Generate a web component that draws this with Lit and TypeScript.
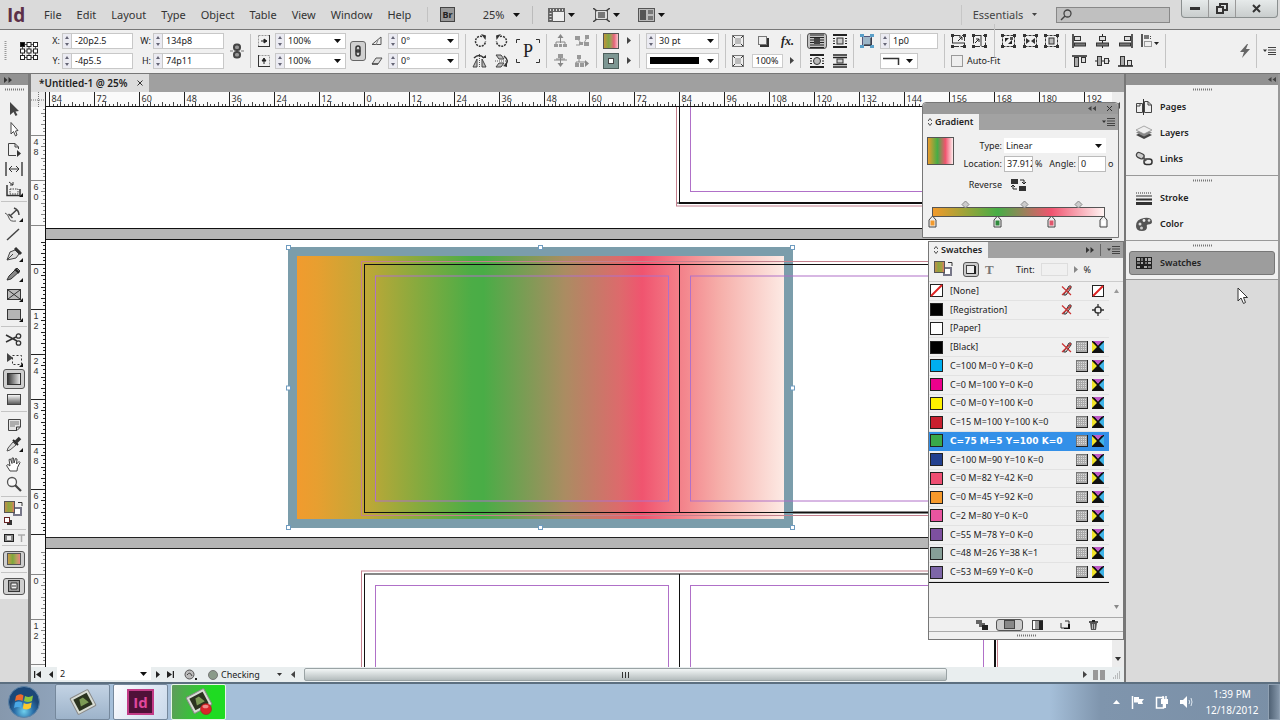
import { LitElement, html, svg, css, nothing } from "lit";
import { customElement } from "lit/decorators.js";
import { classMap } from "lit/directives/class-map.js";

const icon = (w: number, h: number, body: unknown) =>
  html`<svg class="ic" width=${w} height=${h} viewBox="0 0 ${w} ${h}" aria-hidden="true">${body}</svg>`;

const down = () => icon(7, 4, svg`<path d="M0 0H7L3.5 4Z" fill="#111"/>`);
const playRight = (c = "#444") => icon(4, 7, svg`<path d="M0 0V7L4 3.5Z" fill=${c}/>`);
const playLeft = (c = "#444") => icon(4, 7, svg`<path d="M4 0V7L0 3.5Z" fill=${c}/>`);
const dblLeft = () => icon(8, 5, svg`<path d="M3.5 0V5L0 2.5ZM8 0V5L4.500 2.500Z" fill="#444"/>`);
const dblRight = () => icon(8, 6, svg`<path d="M0 0V6L3.500 3ZM4.500 0V6L8 3Z" fill="#333"/>`);
const panelMenu = () =>
  icon(13, 8, svg`<path d="M0 2.500H4L2 5Z" fill="#333"/><path d="M5 .5H13M5 3H13M5 5.500H13M5 7.500H13" stroke="#444"/>`);
const grip = () => icon(19, 3, svg`<path d="M0 1.500H19" stroke="#777" stroke-width="2" stroke-dasharray="1 1"/>`);

/* ---------- control strip icons ---------- */
const refPoint = () =>
  icon(18, 18, svg`<path d="M4 2.500H14M4 9H14M4 15.500H14M2.500 4V14M9 4V14M15.500 4V14" stroke="#555"/>
    ${[0, 6.5, 13].map((y) => [0, 6.5, 13].map((x) => svg`<rect x=${x + 0.5} y=${y + 0.5} width="4" height="4" fill=${x + y === 0 ? "#000" : "#fff"} stroke="#222"/>`))}`);
const unlinked = () =>
  icon(14, 16, svg`<rect x="4" y="1.500" width="6" height="5.500" rx="2.500" fill="#999" stroke="#444" stroke-width="2"/>
    <rect x="4" y="9" width="6" height="5.500" rx="2.500" fill="#999" stroke="#444" stroke-width="2"/><path d="M0 8H3M11 8H14" stroke="#777"/>`);
const linked = () =>
  icon(8, 12, svg`<rect x="2" y="1" width="4" height="6" rx="2" fill="none" stroke="#333" stroke-width="1.500"/><rect x="2" y="5" width="4" height="6" rx="2" fill="none" stroke="#333" stroke-width="1.500"/>`);
const scaleX = () =>
  icon(12, 12, svg`<rect x="0.500" y="0.500" width="11" height="11" fill="none" stroke="#999" stroke-dasharray="2 1"/><path d="M0 11.500H12M11.500 0V12" stroke="#333"/><path d="M3 6H8M6 4L9 6L6 8Z" stroke="#222" fill="#222"/>`);
const scaleY = () =>
  icon(12, 12, svg`<rect x="0.500" y="0.500" width="11" height="11" fill="none" stroke="#999" stroke-dasharray="2 1"/><path d="M0 11.500H12M.5 0V12" stroke="#333"/><path d="M6 9V4M4 6L6 3L8 6Z" stroke="#222" fill="#222"/>`);
const rotAngle = () => icon(12, 10, svg`<path d="M1 8.500H10V1L1 8.500" fill="none" stroke="#555"/><path d="M5 9L7 4" stroke="#888"/>`);
const shear = () => icon(12, 8, svg`<path d="M1 7H7L11 1H5Z" fill="#ddd" stroke="#555"/><path d="M1 7H7" stroke="#222"/>`);
const rotate = (cw: boolean) =>
  icon(14, 14, svg`<g transform=${cw ? "" : "translate(14 0) scale(-1 1)"}>
    <path d="M9 2.500A5 5 0 1 0 12.500 7" fill="none" stroke="#333" stroke-width="1.500" stroke-dasharray="2 1"/><path d="M8 0L13 1.500L12.500 6Z" fill="#333"/></g>`);
const flipH = () =>
  icon(15, 14, svg`<path d="M7.500 0V14" stroke="#555" stroke-dasharray="1 1"/><path d="M5 5L1 13H5ZM10 5L14 13H10Z" fill="#bbb" stroke="#444"/><path d="M2 4Q7 -1 12 4" fill="none" stroke="#333" stroke-width="1.500"/><path d="M10 4H14V1Z" fill="#333"/>`);
const flipV = () =>
  icon(14, 14, svg`<path d="M0 7H14" stroke="#555" stroke-dasharray="1 1"/><path d="M1 1H6L9 5H4ZM1 13H6L9 9H4Z" fill="#bbb" stroke="#444"/><path d="M9 2Q15 7 10 11" fill="none" stroke="#333" stroke-width="1.500"/><path d="M8 12L12 13L12 9Z" fill="#333"/>`);
const tree = (v: number) =>
  icon(15, 14, [
    svg`<path d="M7.500 4V9M3 11V8H12V11" stroke="#888" fill="none"/><path d="M7.500 0L10.500 4H4.500Z" fill="#888"/><path d="M1 10H5V13H1ZM6 10H9V13H6ZM10 10H14V13H10Z" fill="#999"/>`,
    svg`<path d="M2 4L6 9M13 2L9 9M1 11H5" stroke="#999"/><path d="M0 2H5V6H0ZM10 1H14V5H10ZM4 8H8V11H4ZM9 8H14V12H9Z" fill="#999"/>`,
    svg`<path d="M7.500 13L10.500 9H4.500Z" fill="#888"/><path d="M7.500 2V9M3 5H12M1 6H14" stroke="#888"/><rect x="5" y="0" width="5" height="4" fill="#999"/>`,
    svg`<path d="M4 2V8M1 11V8H10" stroke="#888" fill="none"/><path d="M2 1H6V5H2ZM0 9H4V13H0ZM5 9H9V13H5Z" fill="#999"/><path d="M10 6V13L14 9.500Z" fill="#888"/>`,
  ][v]);
const pMark = () =>
  icon(24, 24, svg`<path d="M.5 4V.5H4M20 .5H23.500V4M.5 20V23.500H4M20 23.500H23.500V20" fill="none" stroke="#333"/>
    <text x="12" y="18" text-anchor="middle" font-family="Liberation Serif, serif" font-size="18" fill="#222">P</text>`);
const fillBox = () =>
  icon(16, 16, svg`<defs><linearGradient id="fb"><stop offset="0" stop-color="#c9923a"/><stop offset=".35" stop-color="#7fa544"/><stop offset=".5" stop-color="#a89a5a"/><stop offset=".7" stop-color="#e8627a"/><stop offset="1" stop-color="#fcd0d4"/></linearGradient></defs>
    <rect x=".5" y=".5" width="15" height="15" fill="url(#fb)" stroke="#555"/>`);
const strokeBox = () =>
  icon(16, 16, svg`<rect x=".5" y=".5" width="15" height="15" fill="#7d9793" stroke="#4d5f5c"/><rect x="5.500" y="5.500" width="5" height="5" fill="#fff" stroke="#444"/>`);
const checker = () =>
  icon(12, 12, svg`<rect x=".5" y=".5" width="11" height="11" fill="#eee" stroke="#777"/><rect x="3" y="3" width="6" height="6" fill="#bbb"/><path d="M1 1L3 3M11 1L9 3M1 11L3 9M11 11L9 9" stroke="#333"/>`);
const shadowBox = () => icon(12, 12, svg`<rect x="3" y="3" width="9" height="9" fill="#333"/><rect x="1.500" y="1.500" width="8" height="8" fill="#eee" stroke="#777"/>`);
const wrap = (v: number) =>
  icon(14, 14, [
    svg`<path d="M0 1H14M0 3.500H14M0 6H14M0 8.500H14M0 11H14M0 13.500H14" stroke="#222" stroke-width="1"/><rect x="4" y="4" width="6" height="6" fill="#444"/>`,
    svg`<path d="M0 1H14M0 13H14" stroke="#222" stroke-width="2"/><path d="M0 4.500H2M0 7H2M0 9.500H2M12 4.500H14M12 7H14M12 9.500H14" stroke="#222"/><rect x="4" y="4" width="6" height="6" fill="#ccc" stroke="#333"/>`,
    svg`<path d="M0 1H14M0 13H14" stroke="#222" stroke-width="2"/><path d="M0 4.500H2M0 7H2M0 9.500H2M12 4.500H14M12 7H14M12 9.500H14" stroke="#222"/><circle cx="7" cy="7" r="3.500" fill="#bbb" stroke="#333"/>`,
    svg`<path d="M0 1H14M0 13H14M0 3.500H14M0 10.500H14" stroke="#222" stroke-width="1.500"/><rect x="4" y="5" width="6" height="4" fill="#ccc" stroke="#333"/>`,
  ][v]);
const cornerFx = () =>
  icon(14, 14, svg`<rect x="2.500" y="2.500" width="9" height="9" fill="#9db6c8" stroke="#557"/><path d="M0 0H4V3H0ZM10 0H14V3H10ZM0 11H4V14H0ZM10 11H14V14H10Z" fill="#5a9fc8"/><path d="M11 4V11H4" stroke="#222" fill="none"/>`);
const fitIcon = (v: number) =>
  icon(15, 14, svg`<rect x="1.500" y="1.500" width="12" height="11" fill="none" stroke="#333" stroke-dasharray=${v < 2 ? "8 1.500" : "3 1"}/>
    <path d="M0 0H3V3H0ZM12 0H15V3H12ZM0 11H3V14H0ZM12 11H15V14H12Z" fill="#333"/>${
      [
        svg`<path d="M2 9H13" stroke="#333"/><path d="M7 7L11 3M8 3H11V6" stroke="#222" fill="none"/>`,
        svg`<path d="M9 2V12" stroke="#333"/><path d="M3 9L7 5M4 5H7V8" stroke="#222" fill="none"/>`,
        svg`<path d="M4 4L8 4L4 8ZM11 10L11 6L7 10Z" fill="#222"/><rect x="9" y="3" width="3" height="3" fill="#555"/>`,
        svg`<path d="M3 4V10L7 7ZM12 4V10L8 7Z" fill="#333"/>`,
        svg`<rect x="5" y="4" width="5" height="6" fill="#bbb" stroke="#333"/>`,
      ][v]
    }`);
const align = (v: number) =>
  icon(15, 14, [
    svg`<path d="M1 0V14" stroke="#222" stroke-width="1.500"/><rect x="2.500" y="2.500" width="6" height="4" fill="#ddd" stroke="#333"/><rect x="2.500" y="9" width="11" height="3" fill="#777" stroke="#333"/>`,
    svg`<path d="M7.500 0V14" stroke="#222"/><rect x="4.500" y="2.500" width="6" height="4" fill="#ddd" stroke="#333"/><rect x="1.500" y="9" width="12" height="3" fill="#777" stroke="#333"/>`,
    svg`<path d="M14 0V14" stroke="#222" stroke-width="1.500"/><rect x="6.500" y="2.500" width="6" height="4" fill="#ddd" stroke="#333"/><rect x="1.500" y="9" width="11" height="3" fill="#777" stroke="#333"/>`,
    svg`<path d="M0 2H15" stroke="#222" stroke-width="1.500"/><rect x="2.500" y="3.500" width="4" height="9" fill="#aaa" stroke="#333"/><rect x="9.500" y="3.500" width="4" height="5" fill="#ddd" stroke="#333"/>`,
    svg`<path d="M0 7H15" stroke="#222"/><rect x="2.500" y="2.500" width="4" height="9" fill="#aaa" stroke="#333"/><rect x="9.500" y="4.500" width="4" height="5" fill="#ddd" stroke="#333"/>`,
    svg`<path d="M0 12H15" stroke="#222" stroke-width="1.500"/><rect x="2.500" y="2.500" width="4" height="9" fill="#aaa" stroke="#333"/><rect x="9.500" y="6.500" width="4" height="5" fill="#ddd" stroke="#333"/>`,
  ][v]);
const alignTo = () =>
  icon(18, 14, svg`<path d="M1 0V13" stroke="#222" stroke-width="1.500"/><rect x="3" y="1" width="5" height="4" fill="#777"/><rect x="3.500" y="7.500" width="7" height="5" fill="none" stroke="#444" stroke-dasharray="1 1"/><path d="M9.500 2V6" stroke="#444" stroke-dasharray="1 1"/><path d="M13 8H18L15.500 11Z" fill="#222"/>`);

/* ---------- tool box ---------- */
const tri = svg`<path d="M19 13V17H15Z" fill="#111"/>`;
const tools: Record<string, unknown> = {
  Selection: svg`<path d="M6 2V15L9.500 12L11.500 16L13.500 15L11.500 11.500L15 11Z" fill="#444"/>`,
  "Direct Selection": svg`<path d="M7 2.500V14L9.500 11.500L11.500 16L13 15L11.500 11L14 10.500Z" fill="#fff" stroke="#444"/>`,
  Page: svg`<path d="M4.500 3.500H11L14.500 7V9M11 3.500V7H14.500M4.500 3.500V15.500H12" fill="none" stroke="#444"/><path d="M13 10V17L17 13.500Z" fill="#333"/>`,
  Gap: svg`<path d="M2 2V16M18 2V16" stroke="#444" stroke-width="1.500"/><path d="M5 9H15M8 6L5 9L8 12M12 6L15 9L12 12" stroke="#333" fill="none"/>`,
  "Content Collector": svg`<path d="M3 5V15.500H16V9" fill="none" stroke="#333" stroke-width="1.500"/><path d="M6 9H14V14H6Z" fill="none" stroke="#444" stroke-dasharray="1.500 1"/><path d="M5 2L9 5M9 2V5H6" stroke="#333" fill="none"/>${tri}`,
  Type: svg`<path d="M1 8Q4 9 5 13T12 16" stroke="#555" fill="none"/><path d="M10 3Q15 5 15 10M12.500 5L6 11M4.500 9L8.500 13" stroke="#444" stroke-width="1.500" fill="none"/>${tri}`,
  Line: svg`<path d="M3 15L15 4" stroke="#444" stroke-width="1.500"/>`,
  Pen: svg`<path d="M3 15L6 7L11 5L15 9L12 13Z" fill="#ddd" stroke="#444"/><path d="M11 3L17 9" stroke="#333" stroke-width="3"/><path d="M3 15L9 9" stroke="#444"/>${tri}`,
  Pencil: svg`<path d="M3 15L5 11L13 3L16 6L7 14Z" fill="#888" stroke="#333"/><path d="M11 4L15 8" stroke="#222" stroke-width="2"/>${tri}`,
  "Rectangle Frame": svg`<rect x="3.500" y="4.500" width="13" height="10" fill="#bbb" stroke="#333"/><path d="M4 5L16 14M16 5L4 14" stroke="#333"/>${tri}`,
  Rectangle: svg`<rect x="3.500" y="4.500" width="13" height="10" fill="#b4b4b4" stroke="#333"/>${tri}`,
  Scissors: svg`<path d="M2 5L13 11M2 12L12 7" stroke="#333" stroke-width="1.500"/><circle cx="14.500" cy="6" r="2.200" fill="none" stroke="#333" stroke-width="1.300"/><circle cx="14.500" cy="13" r="2.200" fill="none" stroke="#333" stroke-width="1.300"/>`,
  "Free Transform": svg`<path d="M3 3V12L9 8Z" fill="#444"/><rect x="8.500" y="5.500" width="9" height="9" fill="none" stroke="#333" stroke-dasharray="2 2"/>${tri}`,
  "Gradient Swatch": svg`<defs><linearGradient id="tg1"><stop offset="0" stop-color="#333"/><stop offset="1" stop-color="#eee"/></linearGradient></defs><rect x="3.500" y="3.500" width="13" height="11" fill="url(#tg1)" stroke="#333"/>`,
  "Gradient Feather": svg`<defs><linearGradient id="tg2" x2="0" y2="1"><stop offset="0" stop-color="#fff"/><stop offset="1" stop-color="#555"/></linearGradient></defs><rect x="3.500" y="4.500" width="13" height="10" fill="url(#tg2)" stroke="#444"/>`,
  Note: svg`<path d="M4.500 4.500H16.500V12L13 15.500H4.500Z" fill="#e4e4e4" stroke="#444"/><path d="M6 7H15M6 9H15M6 11H11" stroke="#777"/><path d="M12.500 15V12H16" stroke="#333" fill="none"/>`,
  Eyedropper: svg`<path d="M3 16L4 13L9 7L12 10L6 15Z" fill="#ddd" stroke="#555"/><path d="M9 5L14 10" stroke="#222" stroke-width="2"/><path d="M12 7L16 3" stroke="#333" stroke-width="3.500"/>${tri}`,
  Hand: svg`<path d="M6 16L2.500 10.500L4 9.500L6 11L5 4.500L6.500 4L8 8.500V3H9.500L10 8L11.500 3.500L13 4L12.500 9L15 6.500L16 7.500L13.500 12.500L13 16Z" fill="#fff" stroke="#444"/>`,
  Zoom: svg`<circle cx="8" cy="7" r="4.500" fill="#f8f8f8" stroke="#555" stroke-width="1.300"/><path d="M11 10L17 16" stroke="#444" stroke-width="2.200"/>`,
};
const toolGroups = [
  ["Selection", "Direct Selection", "Page", "Gap", "Content Collector"],
  ["Type", "Line", "Pen", "Pencil", "Rectangle Frame", "Rectangle"],
  ["Scissors", "Free Transform", "Gradient Swatch", "Gradient Feather"],
  ["Note", "Eyedropper", "Hand", "Zoom"],
];
const rainbow = (id: string) => svg`<linearGradient id=${id}>
  <stop offset="0" stop-color="#f39a2c"/><stop offset=".38" stop-color="#46ad46"/><stop offset=".69" stop-color="#f0546f"/><stop offset="1" stop-color="#fff6f4"/></linearGradient>`;
const fillStroke = (id: string, w: number, h: number) =>
  icon(w, h, svg`<defs><linearGradient id=${id}><stop offset="0" stop-color="#c98a4a"/><stop offset=".4" stop-color="#8fa43f"/><stop offset=".75" stop-color="#a8a040"/><stop offset="1" stop-color="#f0687a"/></linearGradient></defs>
    <rect x=${w - 10} y="7" width="7" height="7" fill="#fff" stroke="#778" stroke-width="2"/>
    <rect x=".5" y=".5" width="10" height="11" fill="url(#${id})" stroke="#555"/>
    <path d=${`M${w - 6} 1.500H${w - 2}V5`} fill="none" stroke="#333"/>`);

/* ---------- swatches ---------- */
const swatches: [string, string, string][] = [
  ["[None]", "none", "pn"],
  ["[Registration]", "#000", "pr"],
  ["[Paper]", "#fff", ""],
  ["[Black]", "#000", "pgc"],
  ["C=100 M=0 Y=0 K=0", "#00aeef", "gc"],
  ["C=0 M=100 Y=0 K=0", "#ec008c", "gc"],
  ["C=0 M=0 Y=100 K=0", "#fff200", "gc"],
  ["C=15 M=100 Y=100 K=0", "#c8202f", "gc"],
  ["C=75 M=5 Y=100 K=0", "#39a949", "gc"],
  ["C=100 M=90 Y=10 K=0", "#22408f", "gc"],
  ["C=0 M=82 Y=42 K=0", "#ee4e72", "gc"],
  ["C=0 M=45 Y=92 K=0", "#f6992b", "gc"],
  ["C=2 M=80 Y=0 K=0", "#e9559f", "gc"],
  ["C=55 M=78 Y=0 K=0", "#7d50a0", "gc"],
  ["C=48 M=26 Y=38 K=1", "#879f98", "gc"],
  ["C=53 M=69 Y=0 K=0", "#7d66a8", "gc"],
];
const noEdit = () => icon(11, 11, svg`<path d="M2.500 10L8 1H10V3L5 10Z" fill="#ccc" stroke="#333"/><path d="M1 1.500L10 10M1 10L10 1.500" stroke="#c33" stroke-width="1.200"/>`);
const grayBox = () => icon(12, 12, svg`<rect x=".5" y=".5" width="11" height="11" fill="#aaa" stroke="#777"/><path d="M1 2.500H11M1 4.500H11M1 6.500H11M1 8.500H11" stroke="#ddd" stroke-dasharray="1 1"/><path d="M11.500 0V12M0 11.500H12" stroke="#222"/>`);
const cmykBox = () =>
  icon(12, 12, svg`<rect width="12" height="12" fill="#111"/><path d="M1 0H11L6 5Z" fill="#c05ac8"/><path d="M0 1L5 6L0 11Z" fill="#f2e52a"/><path d="M12 1L7 6L12 11Z" fill="#3fb4e8"/><path d="M2 1L10 11M10 1L2 11" stroke="#111" stroke-width="1.200"/>`);
const noneBox = () => icon(12, 12, svg`<rect x=".5" y=".5" width="11" height="11" fill="#fff" stroke="#222"/><path d="M1 11L11 1" stroke="#d22" stroke-width="2"/>`);
const regIcon = () => icon(12, 12, svg`<circle cx="6" cy="6" r="3.200" fill="none" stroke="#333" stroke-width="1.300"/><path d="M6 0V4M6 8V12M0 6H4M8 6H12" stroke="#333" stroke-width="1.300"/>`);

/* ---------- dock icons ---------- */
const dockIcons: Record<string, unknown> = {
  Pages: svg`<path d="M1.500 5.500H7.500V14.500H1.500ZM9.500 3.500H13L16.500 7V14.500H9.500Z" fill="#eee" stroke="#444"/><path d="M8.500 1V17" stroke="#333"/><path d="M13 3.500V7H16.500M1.500 8H5V5" fill="none" stroke="#444"/>`,
  Layers: svg`<path d="M9 7L17 11L9 15L1 11Z" fill="#444"/><path d="M9 4.500L17 8.500L9 12.500L1 8.500Z" fill="#888"/><path d="M9 2L17 6L9 10L1 6Z" fill="#eee" stroke="#888" stroke-width=".7"/>`,
  Links: svg`<rect x="1.500" y="3" width="8" height="5" rx="2.500" transform="rotate(25 5 5)" fill="#ccc" stroke="#444" stroke-width="1.300"/><rect x="9" y="9" width="8" height="5.500" rx="2.500" fill="#eee" stroke="#333" stroke-width="1.500"/><path d="M8 7L11 11" stroke="#555" stroke-width="2"/>`,
  Stroke: svg`<path d="M1 4H17" stroke="#333" stroke-dasharray="1 1"/><path d="M1 7H17" stroke="#333"/><path d="M1 10.500H17" stroke="#333" stroke-width="2"/><path d="M1 14.500H17" stroke="#333" stroke-width="3"/>`,
  Color: svg`<path d="M1 11Q1 4 9 3Q17 2 17 7Q17 9 13 9.500Q11 10 12 12Q12 16 7 16Q1 16 1 11Z" fill="#555"/><circle cx="5" cy="9" r="1.500" fill="#ddd"/><circle cx="9" cy="5.500" r="1.400" fill="#eee"/><circle cx="14" cy="5.500" r="1.300" fill="#ddd"/><circle cx="6.500" cy="13" r="1.500" fill="#ccc"/>`,
  Swatches: svg`<rect x="1" y="3" width="16" height="12" fill="#222"/><path d="M2 4H5V7H2ZM10 4H12V7H10ZM13 4H16V7H13ZM6 8H8V10H6ZM13 8H16V10H13ZM2 12H5V14H2ZM9 12H12V14H9Z" fill="#aaa"/><path d="M6 4H8V7H6ZM2 8H5V10H2ZM10 8H12V10H10ZM13 12H16V14H13Z" fill="#777"/>`,
};
const dock = [["Pages", "Layers", "Links"], ["Stroke", "Color"], ["Swatches"]];

/* ---------- rulers and spreads ---------- */
const STEP = 45; // twelve picas at 25 %
const CHROME_W = 214; // tool box, ruler, scroll bar and dock
const CHROME_H = 160; // bars above and below the canvas

const tickAt = (k: number) => (k === 0 ? 0 : k % 3 ? 12 : 10);

function hRuler(width: number) {
  const out = [];
  for (let i = -7; 318.5 + i * STEP < width; i++) {
    const x = 318.5 + i * STEP;
    out.push(svg`<path d=${`M${x} 0V15`} stroke="#222"/>`);
    if (x + 20 < width) out.push(svg`<text x=${x + 2} y="10">${Math.abs(i) * 12}</text>`);
    for (let k = 1; k < 12; k++) {
      const t = Math.round(x - 0.5 + (k * STEP) / 12) + 0.5;
      out.push(svg`<path d=${`M${t} ${tickAt(k)}V15`} stroke="#444"/>`);
    }
  }
  return out;
}
/* Ruler stretch between two canvas heights; label is the value at origin. */
function vRuler(origin: number, label: number, from: number, to: number, color: string) {
  const out = [];
  for (let i = -1; origin + i * STEP < to; i++) {
    const y = origin + i * STEP;
    for (let k = 0; k < 12; k++) {
      const t = Math.round(y - 0.5 + (k * STEP) / 12) + 0.5;
      if (t >= from && t <= to) out.push(svg`<path d=${`M${tickAt(k)} ${t}H15`} stroke=${color}/>`);
    }
    if (y >= from && y + 20 <= to) out.push(svg`<text class="up" x="5" y=${y + 1} fill=${color}>${Math.abs(label + i * 12)}</text>`);
  }
  return out;
}
/* One two-page spread: page edges, bleed guide, margin guides. */
const spread = (top: number, bottom: number) => svg`
  <rect x="315.500" y=${top - 3} width="636" height=${bottom - top + 6} fill="none" stroke="#c4808e"/>
  <rect x="329.500" y=${top + 11.5} width="293" height=${bottom - top - 23} fill="none" stroke="#b070c8"/>
  <rect x="644.500" y=${top + 11.5} width="293" height=${bottom - top - 23} fill="none" stroke="#b070c8"/>
  <rect x="318.500" y=${top} width="630" height=${bottom - top} fill="none" stroke="#111"/>
  <path d=${`M633.500 ${top}V${bottom}`} stroke="#111"/>
  <path d=${`M747 ${bottom}H949V${top}`} fill="none" stroke="#111" stroke-width="2"/>`;

@customElement("app-root")
export class AppRoot extends LitElement {
  static styles = css`
    :host { display: flex; flex-direction: column; height: 100vh; overflow: hidden; font: 9px/12px "Noto Sans", "Open Sans", sans-serif; color: #222; background: #dadada; }
    * { box-sizing: border-box; }
    .ic { display: block; flex: none; }
    button, input, select { font: inherit; color: inherit; margin: 0; padding: 0; border: 0; background: none; border-radius: 0; appearance: none; min-width: 0; }
    button { display: flex; align-items: center; justify-content: center; }
    ul { list-style: none; margin: 0; padding: 0; }

    .menubar { display: flex; align-items: center; height: 30px; flex: none; padding-right: 2px; background: #dadada; border-bottom: 1px solid #777; font-size: 11px; line-height: 16px; color: #333; }
    .logo { width: 44px; padding-left: 7px; font: bold 19px/24px "Open Sans", sans-serif; color: #5c3049; }
    .menus { display: flex; gap: 15px; flex: 0 0 383px; }
    .menus button { flex: none; }
    .apptools { display: flex; align-items: center; height: 20px; }
    .bridge { width: 44px; padding-right: 4px; border-left: 1px solid #c2c2c2; }
    .zoomlvl { gap: 9px; width: 62px; border-right: 1px solid #bbb; height: 18px; }
    .drop { gap: 3px; width: 45px; }
    .first { margin-left: 6px; }
    .grow { flex: 1; }
    .workspace { gap: 9px; width: 84px; height: 20px; padding-left: 3px; border-left: 1px solid #c6c6c6; color: #444; }
    .search { display: flex; align-items: center; width: 114px; height: 16px; margin: 0 11px; padding: 0 3px; border: 1px solid #888; background: #c0c0c0; }
    .search input { flex: 1; }
    .winbtns { display: flex; align-self: flex-start; width: 97px; height: 18px; border: 1px solid #8a8f8f; border-top: 0; border-radius: 0 0 4px 4px; background: linear-gradient(#e6eaea, #c9cdcd); }
    .winbtns button { width: 27px; border-right: 1px solid #999; }
    .winbtns button:last-child { flex: 1; border: 0; }

    .control { display: flex; align-items: center; gap: 6px; height: 44px; flex: none; padding: 0 4px 2px 0; background: #f0f0f0; border-bottom: 1px solid #777; }
    .sep { width: 1px; height: 34px; flex: none; background: #c4c4c4; }
    .lead { display: flex; align-items: center; gap: 13px; width: 42px; padding-left: 4px; }
    .pair { display: grid; grid-template-rows: 16px 16px; row-gap: 4px; align-items: center; justify-items: center; flex: none; }
    .pair label { justify-self: end; }
    .xy { grid-template-columns: 12px 71px; column-gap: 2px; }
    .sc { grid-template-columns: 14px 71px; column-gap: 4px; }
    .two { grid-template-columns: 15px 15px; column-gap: 7px; }
    .fs { grid-template-columns: 16px 8px; column-gap: 6px; }
    .one { grid-template-columns: 73px; }
    .wr { grid-template-columns: 20px 14px; column-gap: 6px; }
    .co { grid-template-columns: 14px 58px; column-gap: 6px; }
    .al { grid-template-columns: 15px 15px 15px 18px; column-gap: 8px; }
    .row { display: flex; align-items: center; gap: 4px; }
    .roomy { gap: 7px; }
    .line { display: flex; align-items: center; justify-self: stretch; justify-content: space-between; }
    .fx { grid-template-columns: 62px; }
    .fit { grid-template-columns: 108px; }
    .left { justify-content: flex-start; gap: 4px; }
    .field { display: flex; align-self: stretch; justify-self: stretch; background: #fff; border: 1px solid #c8c8c8; height: 16px; }
    .field input { flex: 1; width: 0; padding-left: 3px; }
    .spin { display: flex; flex-direction: column; width: 9px; flex: none; background: #ebebf2; border-right: 1px solid #c8c8c8; }
    .spin button { flex: 1; }
    .field > button { width: 15px; }
    .chain { width: 16px; height: 20px; border: 1px solid #666; border-radius: 3px; background: #d0d0d0; }
    .bar { flex: 1; height: 7px; margin: 3px 4px 3px 3px; background: #000; }
    .fxname { font: italic bold 12px/14px "Liberation Serif", serif; }
    .pct { width: 31px; height: 14px; padding-left: 3px; background: #fff; border: 1px solid #ccc; }
    .on { align-self: stretch; justify-self: stretch; border: 1px solid #555; border-radius: 3px; background: #c4c4c4; }
    .short { width: 38px; justify-self: start; }
    .tick { width: 12px; height: 12px; border: 1px solid #999; background: #eee; }

    .work { display: flex; flex: 1; min-height: 0; }
    .toolbox { width: 31px; flex: none; background: #dadada; border-right: 3px solid #7c7c7c; }
    .colhead { display: flex; align-items: center; height: 11px; padding: 0 4px; background: #929292; }
    .tools { display: flex; flex-direction: column; align-items: center; background: #f0f0f0; padding-bottom: 2px; }
    .griprow { display: flex; align-items: center; justify-content: center; height: 9px; flex: none; }
    .tgroup { padding: 0 2px; border-bottom: 1px solid #c4c4c4; margin-bottom: 2px; padding-bottom: 2px; }
    .tgroup.top { padding-top: 5px; }
    .tool { width: 22px; height: 20px; border: 1px solid transparent; border-radius: 3px; }
    .tool.active, .boxed { border: 1px solid #555; background: #cfcfcf; }
    .boxed { width: 22px; height: 17px; border-radius: 3px; }
    .fsrow { height: 28px; display: flex; flex-direction: column; justify-content: space-between; padding: 2px 0 1px; }
    .mini { display: flex; gap: 4px; height: 11px; align-items: center; }
    .modal { height: 22px; display: flex; align-items: center; }

    .doc { position: relative; flex: 1; min-width: 0; display: grid; grid-template: 18px 15px minmax(0, 1fr) 15px / 15px minmax(0, 1fr) 12px; background: #fff; }
    .tabs { grid-column: 1 / -1; display: flex; background: #a0a0a0; }
    .tab { display: flex; align-items: center; gap: 9px; padding: 0 6px 0 8px; font-weight: 600; font-size: 10px; background: #dcdcdc; }
    .ruler { width: 100%; height: 100%; display: block; background: #fafafa; font: 9px "Noto Sans", sans-serif; overflow: hidden; }
    .ruler text { fill: #333; }
    .ruler .up { writing-mode: vertical-rl; text-orientation: upright; font: 9px "Liberation Sans", sans-serif; }
    .corner { border-right: 1px solid #222; background: #eee; }
    .hr { border-bottom: 1px solid #111; }
    .vr { border-right: 1px solid #111; }
    .canvas { width: 100%; height: 100%; display: block; }
    .vscroll { grid-row: 2 / 4; grid-column: 3; display: flex; flex-direction: column; align-items: center; justify-content: space-between; padding: 10px 0 6px; background: #ececec; }
    .status { grid-column: 1 / -1; display: flex; align-items: center; padding: 0 4px 0 0; background: #e9eeef; }
    .status > button { width: 13px; height: 14px; flex: none; }
    .status .page { width: 94px; height: 13px; border: 0; flex: none; }
    .status .preflight { width: 28px; }
    .light { width: 10px; height: 10px; margin: 0 3px; border-radius: 5px; background: #8a9a8a; border: 1px solid #777; }
    .state { width: 52px; }
    .track { flex: 1; height: 13px; padding-left: 5px; margin: 0 4px 0 0; }
    .thumb { display: flex; align-items: center; justify-content: center; width: 83%; height: 13px; border: 1px solid #9aa3a5; border-radius: 2px; background: linear-gradient(#f2f6f6, #b4bcbd); }
    .split { width: 12px; height: 10px; margin: 0 7px 0 6px; background: linear-gradient(90deg, #999 5px, transparent 5px, transparent 7px, #999 7px); }

    .panel { position: absolute; background: #f0f0f0; border: 1px solid #777; z-index: 2; }
    .gradient { top: 28px; right: 5px; width: 197px; height: 136px; border-radius: 4px 4px 0 0; }
    .swatches { top: 167px; right: 0; width: 196px; height: 399px; display: flex; flex-direction: column; }
    .phead { display: flex; align-items: center; justify-content: flex-end; gap: 10px; height: 11px; padding-right: 5px; background: #9a9a9a; border-radius: 4px 4px 0 0; }
    .ptabs { display: flex; align-items: center; gap: 6px; height: 16px; flex: none; padding-right: 3px; background: #a2a2a2; }
    .ptab { display: flex; align-items: center; gap: 3px; align-self: stretch; padding: 0 6px 0 5px; font-weight: 600; background: #f0f0f0; }
    .psep { width: 1px; height: 12px; background: #666; }
    .gbody { display: grid; grid-template-columns: 27px 46px 29px 14px 25px 28px 8px; column-gap: 2px; row-gap: 1px; grid-template-rows: 17px 17px 23px; align-items: center; padding: 7px 0 0 4px; }
    .gbody label, .gbody .lab { justify-self: end; white-space: nowrap; }
    .gsw { grid-row: 1 / 3; align-self: start; }
    .gsel { grid-column: 3 / 7; display: flex; align-items: center; height: 15px; background: #fff; padding-right: 4px; }
    .gsel select { flex: 1; padding-left: 2px; }
    .box { width: 100%; height: 16px; padding-left: 2px; background: #fff; border: 1px solid #bbb; }
    .ramp { display: block; padding: 5px 0 0 5px; }

    .stool { display: flex; align-items: center; height: 24px; flex: none; padding-left: 5px; border-bottom: 1px solid #ccc; }
    .fmt { width: 16px; height: 15px; margin: 0 6px 0 9px; border: 1px solid #555; border-radius: 3px; background: #ccc; }
    .tmark { font: bold 13px/14px "Liberation Serif", serif; color: #777; width: 31px; justify-content: flex-start; }
    .tint { width: 27px; height: 13px; margin: 0 6px; border: 1px solid #ddd; }
    .gap5 { width: 6px; }
    .sbody { display: flex; flex: 1; min-height: 0; }
    .slist { display: grid; grid-template: repeat(16, 1fr) / minmax(0, 1fr); width: 180px; flex: none; height: 301px; border-bottom: 1px solid #111; }
    .srow { display: grid; grid-template-columns: 13px minmax(0, 1fr) 11px 12px 12px; column-gap: 4px; align-items: center; padding: 0 5px 0 1px; border-bottom: 1px solid #e2e2e2; }
    .srow .name { padding-left: 3px; white-space: nowrap; }
    .srow.sel { background: #3390e8; color: #fff; font-family: "DejaVu Sans", sans-serif; font-weight: 700; border-color: #3390e8; }
    .chip { width: 13px; height: 13px; border: 1px solid #222; }
    .sscroll { flex: 1; display: flex; flex-direction: column; align-items: center; justify-content: space-between; padding: 7px 0 8px; }
    .sfoot { display: flex; align-items: center; height: 15px; flex: none; border-top: 1px solid #aaa; border-bottom: 1px solid #aaa; padding-left: 46px; gap: 7px; }
    .sfoot button { width: 14px; height: 12px; }
    .sfoot .wide { width: 27px; border: 1px solid #555; border-radius: 3px; background: #ccc; }
    .sgrip { display: flex; align-items: center; justify-content: center; height: 7px; flex: none; }

    .dock { position: relative; width: 156px; flex: none; border-left: 2px solid #777; border-right: 2px solid #999; background: #dadada; }
    .dock .colhead { justify-content: flex-end; padding: 0 2px; }
    .dgroup { background: #f0f0f0; border-bottom: 1px solid #999; padding: 0 3px 3px; }
    .ditem { width: 100%; height: 26px; justify-content: flex-start; gap: 7px; padding-left: 6px; font-weight: 600; border-radius: 3px; }
    .ditem.open { background: #9d9d9d; height: 24px; margin: 1px 0; border: 1px solid #777; padding-left: 5px; }
    .pointer { position: absolute; left: 111px; top: 213px; }

    .taskbar { display: flex; align-items: center; gap: 3px; height: 38px; flex: none; border-top: 2px solid #5c6f80; background: linear-gradient(90deg, #8698ad 0, #8fa3ba 55px, #a5bfd9 60px, #a5bfd9 82%, #7f95ad 86%, #7a8fa6 100%); color: #fff; }
    .start { width: 52px; height: 36px; padding-right: 4px; }
    .task { width: 55px; height: 36px; border: 1px solid #75889c; border-radius: 2px; background: linear-gradient(#c3d3e4, #9db3ca); }
    .task.cur { background: linear-gradient(120deg, #fdfdff, #c8d8ea); }
    .task.rec { background: linear-gradient(100deg, #5f9a5c, #1fdb22 70%); border-color: #e6f7e6; }
    .tray { display: flex; align-items: center; gap: 11px; }
    .clock { text-align: center; font-size: 10px; line-height: 16px; margin: 0 5px 0 0; width: 56px; }
    .peek { width: 12px; height: 36px; border: 1px solid #8fa0b2; background: linear-gradient(90deg, #4f6174, #8496a9); }
    .idsq { width: 27px; height: 26px; border: 2px solid #c23b86; background: #4f1138; color: #e0479c; font: bold 15px/22px "Open Sans", sans-serif; text-align: center; }
  `;

  private onResize = () => this.requestUpdate();
  connectedCallback() {
    super.connectedCallback();
    window.addEventListener("resize", this.onResize);
  }
  disconnectedCallback() {
    window.removeEventListener("resize", this.onResize);
    super.disconnectedCallback();
  }

  private spin() {
    const up = svg`<path d="M0 3H4L2 0Z" fill="#667"/>`;
    const dn = svg`<path d="M0 0H4L2 3Z" fill="#667"/>`;
    return html`<span class="spin"><button aria-label="Increase">${icon(4, 3, up)}</button><button aria-label="Decrease">${icon(4, 3, dn)}</button></span>`;
  }
  private field(id: string, value: string, combo = false) {
    return html`<span class="field">${this.spin()}<input id=${id} aria-label=${id} .value=${value} />${combo ? html`<button aria-label="Choose value">${down()}</button>` : nothing}</span>`;
  }

  private menubar() {
    return html`<header class="menubar">
      <span class="logo">Id</span>
      <nav class="menus">${["File", "Edit", "Layout", "Type", "Object", "Table", "View", "Window", "Help"].map((m) => html`<button>${m}</button>`)}</nav>
      <div class="apptools">
        <button class="bridge" aria-label="Bridge">${icon(15, 15, svg`<rect x=".5" y=".5" width="14" height="14" fill="#999" stroke="#444"/><text x="7.500" y="11" text-anchor="middle" font-size="9" font-weight="bold" fill="#222">Br</text>`)}</button>
        <button class="zoomlvl">25%${down()}</button>
        <button class="drop first" aria-label="View options">${icon(17, 14, svg`<rect x=".5" y=".5" width="16" height="13" fill="#eee" stroke="#555"/><path d="M0 0H17V4H0ZM0 0H5V14H0Z" fill="#666"/><path d="M2 2H16M2.500 5V13" stroke="#ddd" stroke-dasharray="1 2" stroke-width="2"/>`)}${down()}</button>
        <button class="drop" aria-label="Screen mode">${icon(17, 14, svg`<rect x="2.500" y="2.500" width="12" height="9" fill="#ddd" stroke="#555"/><rect x="5" y="4" width="7" height="6" fill="#777"/><path d="M0 0L4 3M17 0L13 3M0 14L4 11M17 14L13 11" stroke="#444" stroke-width="1.500"/>`)}${down()}</button>
        <button class="drop" aria-label="Arrange documents">${icon(17, 14, svg`<rect x=".5" y=".5" width="16" height="13" fill="#bbb" stroke="#555"/><path d="M2 2H8V12H2Z" fill="#555"/><path d="M10 2H15V6H10ZM10 8H15V12H10Z" fill="#777"/>`)}${down()}</button>
      </div>
      <span class="grow"></span>
      <button class="workspace">Essentials ${icon(5, 3, svg`<path d="M0 0H5L2.500 3Z" fill="#444"/>`)}</button>
      <label class="search">${icon(12, 12, svg`<circle cx="7.500" cy="4.500" r="3.500" fill="none" stroke="#444" stroke-width="1.300"/><path d="M5 7L1 11" stroke="#444" stroke-width="1.500"/>`)}<input aria-label="Search" /></label>
      <div class="winbtns">
        <button aria-label="Minimize">${icon(10, 4, svg`<rect y="0" width="10" height="3" fill="#333"/>`)}</button>
        <button aria-label="Restore">${icon(12, 11, svg`<path d="M4 1H11V7H4Z" fill="none" stroke="#333" stroke-width="2"/><path d="M1 4H7V10H1Z" fill="#ddd" stroke="#333" stroke-width="2"/>`)}</button>
        <button aria-label="Close">${icon(9, 9, svg`<path d="M1 1L8 8M8 1L1 8" stroke="#333" stroke-width="2"/>`)}</button>
      </div>
    </header>`;
  }

  private control() {
    const sep = html`<span class="sep"></span>`;
    return html`<section class="control">
      <span class="lead">${icon(3, 20, svg`<path d="M1.500 0V20" stroke="#999" stroke-width="2" stroke-dasharray="1 1"/>`)}${refPoint()}</span>
      <div class="pair xy"><label for="x">X:</label>${this.field("x", "-20p2.5")}<label for="y">Y:</label>${this.field("y", "-4p5.5")}</div>
      <div class="pair xy"><label for="w">W:</label>${this.field("w", "134p8")}<label for="h">H:</label>${this.field("h", "74p11")}</div>
      ${unlinked()}${sep}
      <div class="row">
        <div class="pair sc">${scaleX()}${this.field("scale-x", "100%", true)}${scaleY()}${this.field("scale-y", "100%", true)}</div>
        <button class="chain" aria-label="Constrain proportions">${linked()}</button>
        <div class="pair sc">${rotAngle()}${this.field("rotation", "0°", true)}${shear()}${this.field("shear", "0°", true)}</div>
      </div>
      ${sep}
      <div class="row roomy">
        <div class="pair two">${rotate(true)}${rotate(false)}${flipH()}${flipV()}</div>
        ${pMark()}
      </div>
      ${sep}
      <div class="pair two">${tree(0)}${tree(1)}${tree(2)}${tree(3)}</div>
      ${sep}
      <div class="pair fs">${fillBox()}${playRight()}${strokeBox()}${playRight()}</div>
      ${sep}
      <div class="pair one">${this.field("weight", "30 pt", true)}<span class="field"><span class="bar"></span><button aria-label="Stroke type">${down()}</button></span></div>
      ${sep}
      <div class="pair fx">
        <span class="line">${checker()}${shadowBox()}<button class="fxname">fx.</button></span>
        <span class="line">${checker()}<input class="pct" aria-label="Opacity" .value=${"100%"} />${playRight()}</span>
      </div>
      ${sep}
      <div class="pair wr"><button class="on" aria-label="No text wrap">${wrap(0)}</button>${wrap(1)}${wrap(2)}${wrap(3)}</div>
      ${sep}
      <div class="pair co">${cornerFx()}${this.field("corner", "1p0")}<span></span>
        <span class="field short"><span class="grow">${icon(20, 14, svg`<path d="M2 4.500H17.500V11" fill="none" stroke="#333" stroke-width="1.500"/>`)}</span><button aria-label="Corner shape">${down()}</button></span></div>
      ${sep}
      <div class="pair fit">
        <span class="line">${fitIcon(0)}${fitIcon(1)}<span class="sep"></span>${fitIcon(2)}${fitIcon(3)}${fitIcon(4)}</span>
        <span class="line left"><input class="tick" id="autofit" type="checkbox" /><label for="autofit">Auto-Fit</label></span>
      </div>
      ${sep}
      <div class="pair al">${align(0)}${align(1)}${align(2)}${alignTo()}${align(3)}${align(4)}${align(5)}</div>
      ${sep}
      <span class="grow"></span>
      ${icon(10, 14, svg`<path d="M7 0L0 8H4L2 14L10 5H6L8 0Z" fill="#666"/>`)}
      ${sep}
      ${panelMenu()}
    </section>`;
  }

  private toolbox() {
    return html`<aside class="toolbox">
      <div class="colhead">${dblRight()}</div>
      <div class="tools">
        <div class="griprow">${grip()}</div>
        ${toolGroups.map(
          (g, i) => html`<div class=${classMap({ tgroup: true, top: i === 0 })}>
            ${g.map((t) => html`<button class=${classMap({ tool: true, active: t === "Gradient Swatch" })} title=${t} aria-label=${t}>${icon(20, 18, tools[t])}</button>`)}
          </div>`
        )}
        <div class="tgroup"><div class="fsrow">${fillStroke("tf", 20, 16)}
          ${icon(10, 9, svg`<rect x="3" y="3" width="5" height="5" fill="#333"/><rect x=".5" y=".5" width="5" height="5" fill="#fff" stroke="#622"/>`)}</div></div>
        <div class="tgroup"><div class="mini">${icon(10, 8, svg`<rect x=".5" y=".5" width="9" height="7" fill="#888" stroke="#222"/><rect x="3" y="2" width="4" height="4" fill="#eee"/>`)}${icon(7, 8, svg`<path d="M0 1H7M3.500 1V8" stroke="#aaa" stroke-width="1.500"/>`)}</div></div>
        <div class="tgroup"><div class="modal"><button class="boxed" aria-label="Apply gradient">${icon(14, 12, svg`<defs><linearGradient id="ti"><stop offset="0" stop-color="#d49a4a"/><stop offset=".4" stop-color="#7aa83c"/><stop offset=".7" stop-color="#b8a060"/><stop offset="1" stop-color="#f07a88"/></linearGradient></defs>
          <rect x=".5" y=".5" width="13" height="11" fill="url(#ti)" stroke="#555"/>`)}</button></div></div>
        <div class="modal"><button class="boxed" aria-label="View mode">${icon(12, 12, svg`<rect x=".5" y=".5" width="11" height="11" fill="#999" stroke="#333"/><path d="M3 3H9V9H3Z" fill="#eee" stroke="#333"/><path d="M4 6H8" stroke="#333"/>`)}</button></div>
      </div>
    </aside>`;
  }

  private drawing() {
    const hs = [242.5, 494.5, 746.5];
    const vs = [140.5, 281, 420.5];
    return svg`
      <defs>
        <linearGradient id="art">
          <stop offset="0" stop-color="#f39a2e"/><stop offset=".05" stop-color="#e79f30"/><stop offset=".14" stop-color="#c4a736"/>
          <stop offset=".36" stop-color="#4cad46"/><stop offset=".385" stop-color="#49ad46"/>
          <stop offset=".55" stop-color="#ab8c62"/><stop offset=".66" stop-color="#dd6a6c"/><stop offset=".705" stop-color="#f0546f"/>
          <stop offset=".78" stop-color="#f38089"/><stop offset=".86" stop-color="#f6aea9"/><stop offset="1" stop-color="#fdeee8"/>
        </linearGradient>
      </defs>
      <rect x="246.500" y="144.500" width="496" height="272" fill="url(#art)" stroke="#7b9dab" stroke-width="9"/>
      ${spread(-151.5, 96)}${spread(157.5, 405.5)}${spread(467, 715)}
      <rect x="0" y="-1" width="630" height="121" fill="#fff"/>
      <path d="M630.500 0V99" stroke="#c4808e"/>
      <path d="M633 96H949" stroke="#111" stroke-width="2"/>
      <rect y="121" width="4000" height="12" fill="#b6b6b6"/><path d="M0 121.500H4000M0 132.500H4000" stroke="#111"/>
      <rect y="430" width="4000" height="12" fill="#b6b6b6"/><path d="M0 430.500H4000M0 441.500H4000" stroke="#222"/>
      ${vs.map((y) => hs.map((x) => (x === 494.5 && y === 281 ? nothing : svg`<rect x=${x - 2} y=${y - 2} width="4" height="4" fill="#fff" stroke="#6f9cc0"/>`)))}`;
  }

  private gradientPanel() {
    const stop = (x: number, c: string) =>
      svg`<path d=${`M${x} 26V19L${x + 3.5} 15L${x + 7} 19V26Z`} fill="#eee" stroke="#444"/><rect x=${x + 1.5} y="19.500" width="4" height="5" fill=${c}/>`;
    const mid = (x: number) => svg`<path d=${`M${x} 0L${x + 3.5} 3.500L${x} 7L${x - 3.5} 3.500Z`} fill="#ccc" stroke="#888"/>`;
    return html`<section class="panel gradient">
      <div class="phead"><button aria-label="Collapse">${dblLeft()}</button><button aria-label="Close">${icon(7, 7, svg`<path d="M1 1L6 6M6 1L1 6" stroke="#333"/>`)}</button></div>
      <div class="ptabs"><button class="ptab">${icon(4, 8, svg`<path d="M0 3L2 .5L4 3M0 5L2 7.500L4 5" fill="none" stroke="#444"/>`)}Gradient</button><span class="grow"></span>${panelMenu()}</div>
      <div class="gbody">
        <span class="gsw">${icon(27, 28, svg`<defs>${rainbow("pg")}</defs><rect x=".5" y=".5" width="26" height="27" fill="url(#pg)" stroke="#555"/>`)}</span>
        <label for="gtype">Type:</label><span class="gsel"><select id="gtype"><option>Linear</option><option>Radial</option></select>${down()}</span><span></span>
        <label for="loc">Location:</label><input class="box" id="loc" .value=${"37.912"} /><span>%</span><label for="ang">Angle:</label><input class="box" id="ang" .value=${"0"} /><span>o</span>
        <span></span><span class="lab">Reverse</span>
        <button aria-label="Reverse">${icon(16, 14, svg`<rect x="0" y="1" width="7" height="5" fill="#333"/><rect x="8" y="8" width="7" height="5" fill="#333"/><path d="M9 2H13V5M11 4L13 6L15 4M6 11H2V8M0 9L2 7L4 9" fill="none" stroke="#222"/>`)}</button>
      </div>
      <div class="ramp">${icon(184, 27, svg`<defs>${rainbow("rg")}</defs><rect x="4.500" y="6.500" width="172" height="9" fill="url(#rg)" stroke="#555"/>${mid(37.5)}${mid(96.5)}${mid(150.5)}${stop(1, "#f39a2c")}${stop(66, "#2f8a3c")}${stop(120, "#e0566c")}${stop(172, "#fff")}`)}</div>
    </section>`;
  }

  private swatchPanel() {
    return html`<section class="panel swatches">
      <div class="ptabs"><button class="ptab">${icon(4, 8, svg`<path d="M0 3L2 .5L4 3M0 5L2 7.500L4 5" fill="none" stroke="#444"/>`)}Swatches</button><span class="grow"></span>${dblRight()}<span class="psep"></span>${panelMenu()}</div>
      <div class="stool">${fillStroke("sf", 20, 17)}
        <button class="fmt" aria-label="Container">${icon(10, 9, svg`<rect x=".5" y=".5" width="8" height="8" fill="#eee" stroke="#444"/><path d="M9 1V9H1" stroke="#222" fill="none" stroke-width="2"/>`)}</button>
        <button class="tmark">T</button><label for="tint">Tint:</label><input class="tint" id="tint" disabled />${playRight("#888")}<span class="gap5"></span><span>%</span></div>
      <div class="sbody">
        <ul class="slist">
          ${swatches.map(
            ([name, color, marks], i) => html`<li class=${classMap({ srow: true, sel: i === 8 })}>
              ${color === "none" ? icon(13, 13, svg`<rect x=".5" y=".5" width="12" height="12" fill="#fff" stroke="#222"/><path d="M1 12L12 1" stroke="#d22" stroke-width="2"/>`) : html`<span class="chip" style="background:${color}"></span>`}
              <span class="name">${name}</span>
              <span>${marks.includes("p") ? noEdit() : nothing}</span>
              <span>${marks.includes("g") ? grayBox() : nothing}</span>
              <span>${marks.includes("c") ? cmykBox() : marks.includes("n") ? noneBox() : marks.includes("r") ? regIcon() : nothing}</span>
            </li>`
          )}
        </ul>
        <div class="sscroll">${icon(5, 4, svg`<path d="M0 4H5L2.500 0Z" fill="#999"/>`)}${icon(5, 4, svg`<path d="M0 0H5L2.500 4Z" fill="#888"/>`)}</div>
      </div>
      <div class="sfoot">
        <button aria-label="Show all">${icon(12, 10, svg`<path d="M0 0H6V4H0ZM3 3H9V7H3Z" fill="#666"/><rect x="6" y="5" width="6" height="5" fill="#222"/>`)}</button>
        <button class="wide" aria-label="Show colours">${icon(11, 9, svg`<rect x=".5" y=".5" width="10" height="8" fill="#888" stroke="#444"/>`)}</button>
        <button aria-label="Show gradients">${icon(11, 10, svg`<rect x=".5" y=".5" width="10" height="9" fill="#fff" stroke="#444"/><rect x="3" y="1" width="4" height="8" fill="#999"/><rect x="7" y="1" width="4" height="9" fill="#222"/>`)}</button><span></span>
        <button aria-label="New swatch">${icon(10, 9, svg`<path d="M1 3V8H9V1H5" fill="#eee" stroke="#333"/><path d="M9 4V9H4" stroke="#111" stroke-width="2" fill="none"/>`)}</button><span></span>
        <button aria-label="Delete swatch">${icon(9, 10, svg`<path d="M1 3H8L7 10H2Z" fill="#555"/><path d="M0 2H9M3 .5H6" stroke="#222" stroke-width="1.500"/><path d="M3.500 4V9M5.500 4V9" stroke="#bbb"/>`)}</button>
      </div>
      <div class="sgrip">${grip()}</div>
    </section>`;
  }

  private document() {
    const width = window.innerWidth - CHROME_W;
    const height = window.innerHeight - CHROME_H;
    return html`<main class="doc">
      <div class="tabs"><span class="tab">*Untitled-1 @ 25% <button aria-label="Close document">${icon(6, 6, svg`<path d="M.5 .5L5.500 5.500M5.500 .5L.5 5.500" stroke="#333"/>`)}</button></span></div>
      <svg class="ruler corner"><path d="M0 8H15M7.500 0V15" stroke="#777" stroke-dasharray="1 1"/></svg>
      <svg class="ruler hr">${hRuler(width)}</svg>
      <div class="vscroll">${playLeft()}${icon(6, 4, svg`<path d="M0 0H6L3 4Z" fill="#333"/>`)}</div>
      <svg class="ruler vr">
        ${vRuler(28.5, 48, 0, 121, "#888")}
        ${vRuler(157.5, 0, 134, 430, "#222")}
        ${vRuler(467.5, 0, 443, height, "#888")}
      </svg>
      <svg class="canvas" role="img" aria-label="Spread">${this.drawing()}</svg>
      <footer class="status">
        <button aria-label="First page">${icon(7, 7, svg`<path d="M.500 0V7" stroke="#222" stroke-width="1.500"/><path d="M7 0V7L2 3.500Z" fill="#222"/>`)}</button>
        <button aria-label="Previous page">${playLeft("#222")}</button>
        <span class="field page"><input aria-label="Page" .value=${"2"} /><button aria-label="Choose page">${down()}</button></span>
        <button aria-label="Next page">${playRight("#222")}</button>
        <button aria-label="Last page">${icon(7, 7, svg`<path d="M6.500 0V7" stroke="#222" stroke-width="1.500"/><path d="M0 0V7L5 3.500Z" fill="#222"/>`)}</button>
        <button class="preflight" aria-label="Open">${icon(14, 11, svg`<circle cx="5.500" cy="5.500" r="4.500" fill="#bbb" stroke="#555"/><path d="M3 6Q6 2 8 7" stroke="#444" fill="none"/><rect x="11" y="9" width="2" height="2" fill="#222"/>`)}</button>
        <span class="light"></span><span class="state">Checking</span>
        <button aria-label="Preflight menu">${icon(5, 3, svg`<path d="M0 0H5L2.500 3Z" fill="#333"/>`)}</button>
        <button aria-label="Scroll left">${playLeft()}</button>
        <span class="track"><span class="thumb">${icon(7, 6, svg`<path d="M.5 0V6M3.500 0V6M6.500 0V6" stroke="#333"/>`)}</span></span>
        ${playRight()}<span class="split"></span>
        ${icon(8, 8, svg`<path d="M1 7H8M3 5H8M5 3H8M7 1H8" stroke="#888" stroke-dasharray="1 1"/>`)}
      </footer>
      ${this.gradientPanel()}${this.swatchPanel()}
    </main>`;
  }

  private dockColumn() {
    return html`<aside class="dock">
      <div class="colhead">${dblLeft()}</div>
      ${dock.map((g) => html`<div class="dgroup"><div class="griprow">${grip()}</div>
        ${g.map((d) => html`<button class=${classMap({ ditem: true, open: d === "Swatches" })}>${icon(18, 18, dockIcons[d])}${d}</button>`)}</div>`)}
      <span class="pointer">${icon(12, 18, svg`<path d="M1 1V14L4 11L6.500 16.500L8.500 15.500L6.500 10.500H10.500Z" fill="#fff" stroke="#333"/>`)}</span>
    </aside>`;
  }

  private taskbar() {
    const photo = svg`<g transform="rotate(-28 14 13)"><rect x="4" y="4" width="20" height="18" rx="1" fill="#d8dcd4" stroke="#888"/><rect x="6.500" y="6.500" width="15" height="13" fill="#2b331f"/><path d="M10 16L12 9H16L19 16Z" fill="#7c9a55"/></g>`;
    return html`<footer class="taskbar">
      <button class="start" aria-label="Start">${icon(34, 34, svg`<defs><radialGradient id="orb" cy=".8"><stop offset="0" stop-color="#6fd0ee"/><stop offset=".6" stop-color="#2a6ea8"/><stop offset="1" stop-color="#1c4878"/></radialGradient></defs>
        <circle cx="17" cy="17" r="15.500" fill="url(#orb)" stroke="#5d84a8"/>
        <path d="M9 11Q13 8 16.500 10.500L15.500 16Q12 14 8 16Z" fill="#ec6a2e"/><path d="M18 11Q22 13 26 10.500L25 16Q21 18 17 16Z" fill="#8cc63e"/>
        <path d="M8 17.500Q12 15.500 15.200 17.500L14.200 23Q11 21 7 23Z" fill="#4aa8e6"/><path d="M16.800 18Q20 20 24.700 17.500L23.700 23Q20 25.500 15.800 23.500Z" fill="#fbc92e"/>`)}</button>
      <button class="task" aria-label="Camera app">${icon(28, 26, photo)}</button>
      <button class="task cur"><span class="idsq">Id</span></button>
      <button class="task rec" aria-label="Recorder">${icon(28, 28, svg`${photo}<circle cx="21" cy="21" r="5.500" fill="#d8252a" stroke="#8e1b1b" stroke-width=".5"/><ellipse cx="20.500" cy="18.500" rx="3" ry="1.800" fill="#f08a8a"/>`)}</button>
      <span class="grow"></span>
      <div class="tray">
        ${icon(7, 4, svg`<path d="M0 4H7L3.500 0Z" fill="#fff"/>`)}
        ${icon(13, 14, svg`<path d="M1.500 1V14" stroke="#fff" stroke-width="1.500"/><path d="M3 2H8V4H13L11 6.500L12 9H7V7.500H3Z" fill="#fff"/>`)}
        ${icon(14, 14, svg`<rect x="1.500" y="2.500" width="7" height="10.500" fill="none" stroke="#fff" stroke-width="1.500"/><path d="M6 4H13V9H11V13H8V9H6Z" fill="#fff"/><path d="M8 1V4M11 1V4" stroke="#fff" stroke-width="1.500"/>`)}
        ${icon(13, 12, svg`<path d="M0 4H3L7 0V12L3 8H0Z" fill="#fff"/><path d="M9 4Q10.500 6 9 8M11 2Q13 6 11 10" stroke="#dfe8f0" fill="none"/>`)}
        <div class="clock">1:39 PM<br />12/18/2012</div>
      </div>
      <button class="peek" aria-label="Show desktop"></button>
    </footer>`;
  }

  render() {
    return html`${this.menubar()}${this.control()}
      <div class="work">${this.toolbox()}${this.document()}${this.dockColumn()}</div>
      ${this.taskbar()}`;
  }
}
